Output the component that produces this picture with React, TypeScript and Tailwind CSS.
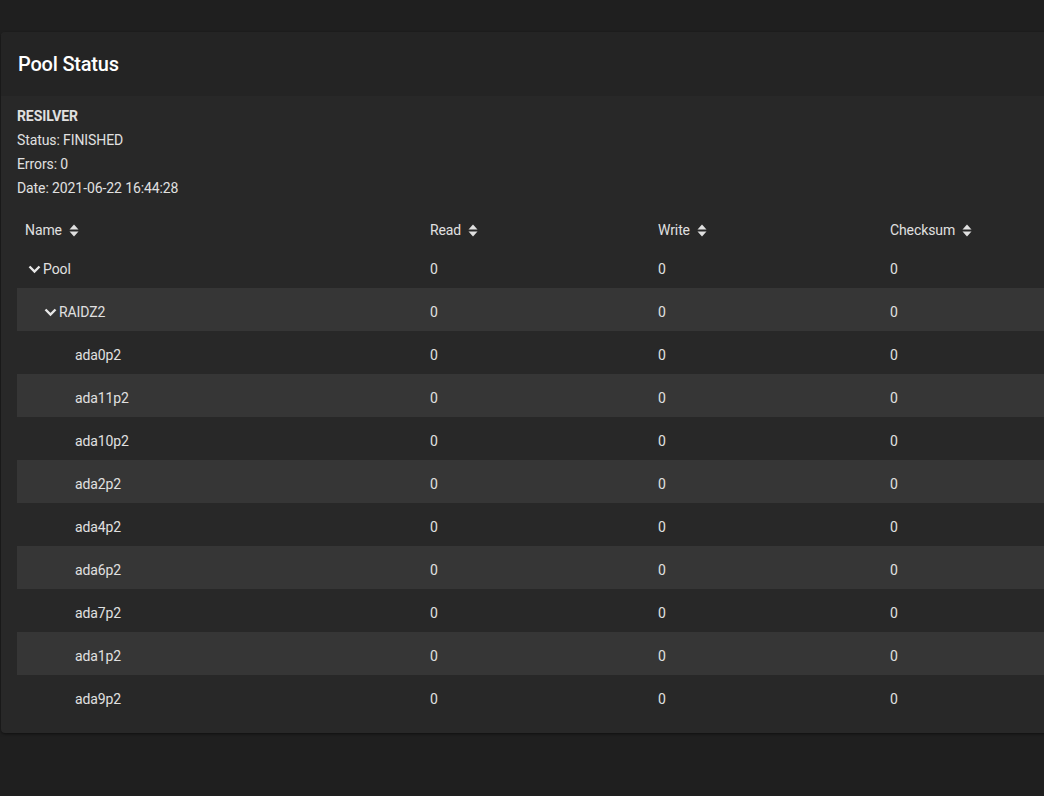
import React from 'react';

const rows = [
  { name: 'Pool', level: 0, expandable: true },
  { name: 'RAIDZ2', level: 1, expandable: true },
  { name: 'ada0p2', level: 2 },
  { name: 'ada11p2', level: 2 },
  { name: 'ada10p2', level: 2 },
  { name: 'ada2p2', level: 2 },
  { name: 'ada4p2', level: 2 },
  { name: 'ada6p2', level: 2 },
  { name: 'ada7p2', level: 2 },
  { name: 'ada1p2', level: 2 },
  { name: 'ada9p2', level: 2 },
];

const SortIcon = () => (
  <svg width="10" height="13" viewBox="0 0 10 13" className="ml-[7px] text-[#e0e0e0]">
    <path d="M5 0.5 L9.5 5.5 H0.5 Z" fill="currentColor" />
    <path d="M5 12.5 L9.5 7.5 H0.5 Z" fill="currentColor" />
  </svg>
);

const Chevron = () => (
  <svg width="13" height="9" viewBox="0 0 13 9" className="mr-[2px]">
    <path d="M1.5 1.5 L6.5 6.5 L11.5 1.5" fill="none" stroke="#e8e8e8" strokeWidth="2.4" />
  </svg>
);

const indent = ['pl-[11px]', 'pl-[27px]', 'pl-[58px]'];

export default function App() {
  return (
    <div
      className="w-[1044px] h-[796px] overflow-hidden bg-[#1f1f1f] pt-[32px] pl-[1px]"
      style={{ fontFamily: 'Roboto, "Liberation Sans", sans-serif' }}
    >
      <div className="w-[1080px] rounded-[4px] bg-[#282828] shadow-[0_1px_3px_rgba(0,0,0,0.5)] overflow-hidden">
        <div className="h-[64px] bg-[#242424] flex items-center px-[17px]">
          <h1 className="text-[20px] font-medium text-white tracking-[-0.2px]">Pool Status</h1>
        </div>
        <div className="pl-[16px] pt-[8px] pb-[15px]">
          <div className="text-[14px] text-[#e0e0e0] leading-[24px] tracking-[-0.1px]">
            <div className="font-bold">RESILVER</div>
            <div>Status: FINISHED</div>
            <div>Errors: 0</div>
            <div>Date: 2021-06-22 16:44:28</div>
          </div>
          <div className="mt-[11px] text-[14px] text-[#e0e0e0] tracking-[-0.1px]">
            <div className="flex h-[38px] items-center">
              <div className="w-[405px] pl-[8px] flex items-center">Name<SortIcon /></div>
              <div className="w-[228px] pl-[8px] flex items-center">Read<SortIcon /></div>
              <div className="w-[232px] pl-[8px] flex items-center">Write<SortIcon /></div>
              <div className="flex-1 pl-[8px] flex items-center">Checksum<SortIcon /></div>
            </div>
            {rows.map((r, i) => (
              <div
                key={r.name}
                className={`flex items-center ${i === 0 ? 'h-[39px] pt-[2px]' : 'h-[43px] pt-[5px]'} ${i % 2 === 1 ? 'bg-[#363636]' : ''}`}
              >
                <div className={`w-[405px] flex items-center ${indent[r.level]}`}>
                  {r.expandable && <Chevron />}
                  <span>{r.name}</span>
                </div>
                <div className="w-[228px] pl-[8px]">0</div>
                <div className="w-[232px] pl-[8px]">0</div>
                <div className="flex-1 pl-[8px]">0</div>
              </div>
            ))}
          </div>
        </div>
      </div>
    </div>
  );
}
